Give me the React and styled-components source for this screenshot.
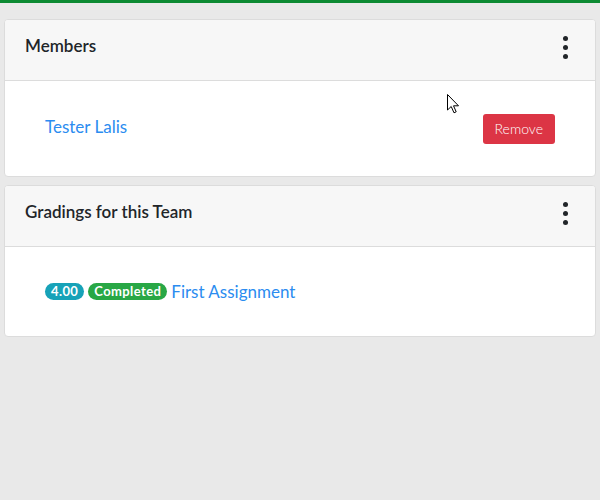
import React from 'react'
import styled, { createGlobalStyle } from 'styled-components'

const GlobalStyle = createGlobalStyle`
    html, body {
        margin: 0;
        padding: 0;
        background: #e9e9e9;
        font-family: "Lato", "Open Sans", sans-serif;
        color: #212529;
    }
`;

const Page = styled.div`
    position: relative;
    min-height: 500px;
    border-top: 3px solid #0c8a32;
    padding: 16px 4px 0;
    display: flex;
    flex-direction: column;
    gap: 8px;
`;

const Card = styled.div`
    background: #fff;
    border: 1px solid #dcdcdc;
    border-radius: 4px;
    overflow: hidden;
`;

const CardHeader = styled.div`
    height: 61px;
    box-sizing: border-box;
    padding: 0 20px 6px;
    display: flex;
    align-items: center;
    justify-content: space-between;
    background: #f7f7f7;
    border-bottom: 1px solid #dcdcdc;
`;

const CardTitle = styled.h5`
    margin: 0 0 4px;
    font-size: 17px;
    font-weight: 600;
    color: #212529;
`;

const Kebab = styled.button`
    border: none;
    background: transparent;
    padding: 0;
    margin-right: 5px;
    width: 10px;
    display: flex;
    flex-direction: column;
    align-items: center;
    gap: 4px;
    cursor: pointer;
    span {
        width: 5px;
        height: 5px;
        border-radius: 50%;
        background: #212529;
    }
`;

const CardBody = styled.div`
    height: ${(props) => props.height}px;
    padding: 0 40px;
    display: flex;
    align-items: center;
    justify-content: space-between;
`;

const Row = styled.div`
    display: flex;
    align-items: center;
    gap: 4px;
`;

const Link = styled.a`
    color: #2b8cf0;
    font-size: 17px;
    text-decoration: none;
    cursor: pointer;
    margin-bottom: ${(props) => props.raised ? "5px" : "0"};
`;

const RemoveButton = styled.button`
    height: 30px;
    padding: 0 12px;
    border: none;
    border-radius: 3px;
    background: #dc3545;
    color: #fff;
    font-family: inherit;
    font-size: 14px;
    font-weight: 300;
    cursor: pointer;
`;

const Badge = styled.span`
    display: inline-block;
    padding: 2px 6px;
    border-radius: 10px;
    background: ${(props) => props.variant === "success" ? "#28a745" : "#17a2b8"};
    color: #fff;
    font-size: 13px;
    font-weight: 700;
    line-height: 13px;
    letter-spacing: 0.4px;
`;

const Cursor = styled.svg`
    position: absolute;
    left: 447px;
    top: 91px;
    pointer-events: none;
`;

const Menu = () => (
    <Kebab>
        <span />
        <span />
        <span />
    </Kebab>
);

const App = () => {
  return (
    <Page>
        <GlobalStyle />
        <Card>
            <CardHeader>
                <CardTitle>Members</CardTitle>
                <Menu />
            </CardHeader>
            <CardBody height={95}>
                <Link raised>Tester Lalis</Link>
                <RemoveButton>Remove</RemoveButton>
            </CardBody>
        </Card>
        <Card>
            <CardHeader>
                <CardTitle>Gradings for this Team</CardTitle>
                <Menu />
            </CardHeader>
            <CardBody height={89}>
                <Row>
                    <Badge>4.00</Badge>
                    <Badge variant="success">Completed</Badge>
                    <Link>First Assignment</Link>
                </Row>
            </CardBody>
        </Card>
        <Cursor width="13" height="20" viewBox="0 0 13 20">
            <path d="M0.5 0.5 L0.5 16 L4.2 12.5 L7 18.8 L9.2 17.8 L6.5 11.8 L11.5 11.8 Z" fill="#fff" stroke="#000" strokeWidth="1" />
        </Cursor>
    </Page>
  )
}

export default App
